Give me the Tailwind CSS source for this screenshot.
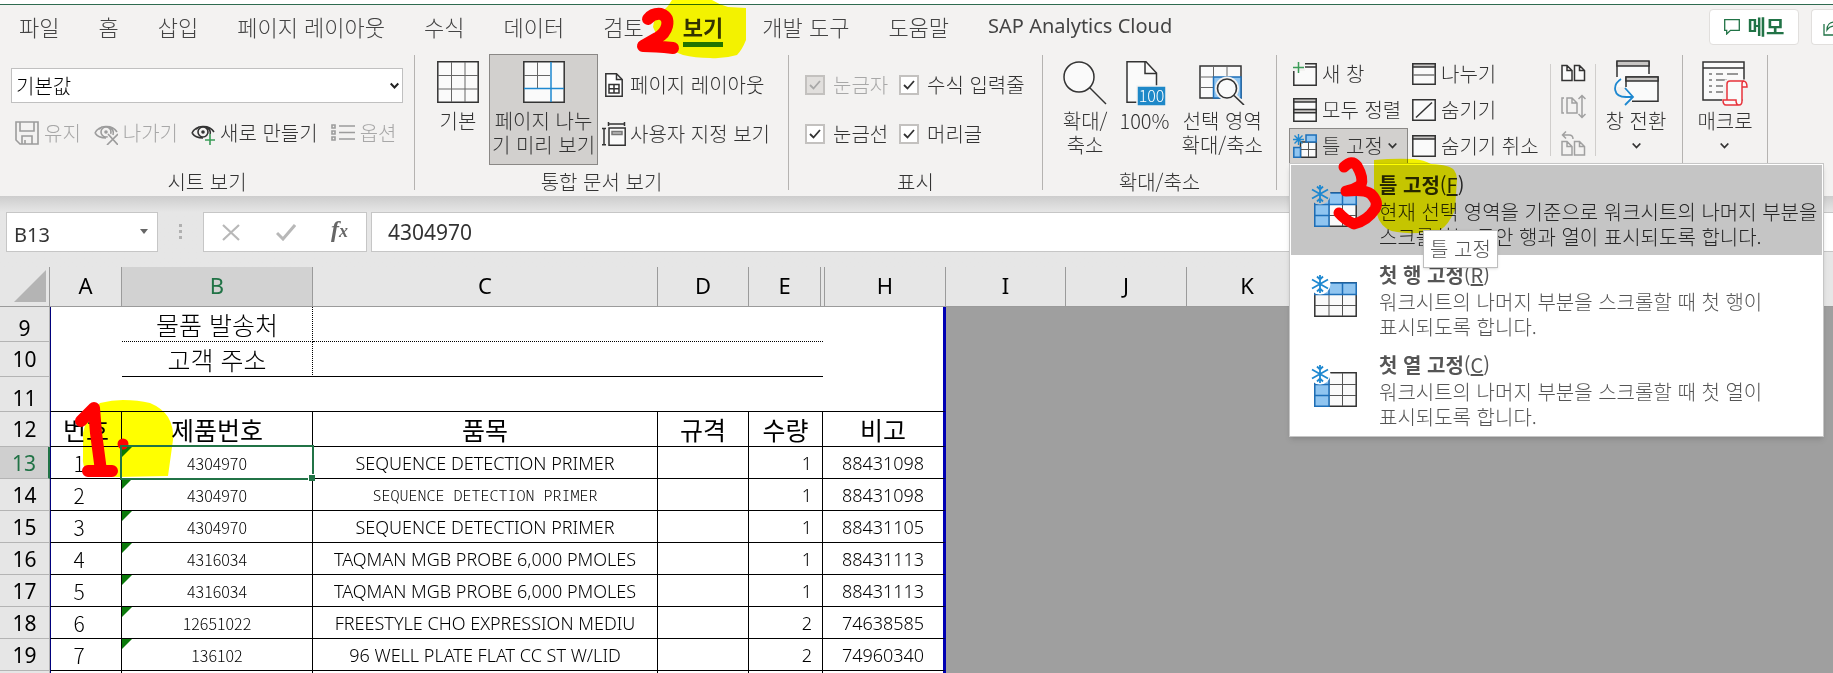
<!DOCTYPE html>
<html lang="ko">
<head>
    <meta charset="UTF-8">
    <title>Excel - 보기</title>
    <!-- Tailwind CSS CDN -->
    <script src="https://cdn.jsdelivr.net/npm/@tailwindcss/browser@4"></script>
</head>
<body class="relative flex h-screen flex-col overflow-hidden bg-[#e6e6e6] font-['Noto_Sans_CJK_KR',sans-serif] text-[20px] font-light leading-[24px] text-[#333]">

    <!-- Ribbon tabs -->
    <header class="flex h-[54px] shrink-0 items-start border-t-4 border-white bg-[#f3f2f1]">
        <div class="flex h-[50px] w-full items-start justify-between border-t border-[#2f6b50]">
            <nav class="flex items-start gap-[39px] pl-[19px] pt-[4px] text-[22px] leading-[34px] text-[#444]">
                <button type="button">파일</button>
                <button type="button">홈</button>
                <button type="button">삽입</button>
                <button type="button">페이지 레이아웃</button>
                <button type="button">수식</button>
                <button type="button">데이터</button>
                <button type="button">검토</button>
                <button type="button" class="h-[38px] border-b-5 border-[#217346] font-bold text-[#333]">보기</button>
                <button type="button">개발 도구</button>
                <button type="button">도움말</button>
                <button type="button" class="font-['Noto_Sans',sans-serif] text-[20px] font-normal">SAP Analytics Cloud</button>
            </nav>
            <div class="flex shrink-0 gap-[12px] pt-[4px]">
                <button type="button" class="flex h-[36px] w-[90px] items-center justify-center gap-[8px] rounded border border-[#e1dfdd] bg-white font-bold text-[#217346]">
                    <svg class="h-[16px] w-[16px]" viewBox="0 0 16 16" fill="none" stroke="#217346" stroke-width="1.3"><path d="M.7.7h14.6v10.6H6.5L2.7 15v-3.7h-2z"/></svg>
                    메모
                </button>
                <button type="button" aria-label="공유" class="flex h-[36px] w-[22px] items-center overflow-hidden rounded-l border border-r-0 border-[#e1dfdd] bg-white pl-[11px]">
                    <svg class="h-[18px] w-[18px] shrink-0" viewBox="0 0 18 18" fill="none" stroke="#217346" stroke-width="1.3"><path d="M1 6v11h15v-4M4 12c0-5 3-8 7-8V1l6 5-6 5V8c-3 0-5 1-7 4z"/></svg>
                </button>
            </div>
        </div>
    </header>

    <!-- Ribbon body -->
    <div class="flex h-[142px] shrink-0 bg-[#f3f2f1]">

        <!-- Sheet view -->
        <section class="flex w-[414px] shrink-0 flex-col items-center pt-[14px]">
            <div class="relative w-[392px]">
                <select aria-label="시트 보기" class="h-[35px] w-full appearance-none border border-[#c0c0c0] bg-white pl-[4px] leading-[32px] text-black">
                    <option>기본값</option>
                </select>
                <svg class="pointer-events-none absolute right-[4px] top-[14px] h-[8px] w-[9px]" viewBox="0 0 9 8" fill="none" stroke="#222" stroke-width="2"><path d="M.7 1.5l3.8 4 3.8-4"/></svg>
            </div>
            <div class="mt-[18px] flex w-full gap-[13px] whitespace-nowrap pl-[15px] text-[#a8a8a8]">
                <button type="button" disabled class="flex items-center gap-[5px]">
                    <svg class="h-[24px] w-[24px]" viewBox="0 0 24 24" fill="none" stroke="#9c9c9c" stroke-width="1.6"><path d="M1 1h22v22H5l-4-4zM5 1v9h14V1M7 23v-8h10v8M10 23v-4"/></svg>
                    유지
                </button>
                <button type="button" disabled class="flex items-center gap-[5px]">
                    <svg class="h-[24px] w-[24px]" viewBox="0 0 24 24" fill="none" stroke="#9c9c9c" stroke-width="1.6"><path d="M1 12C5 4 18 3 23 11M1 12c2 3 6 5 11 5M15 6c4 2 5 5 4 8M5 8l3 -2"/><circle cx="12" cy="11" r="5"/><circle cx="12" cy="11" r="1" fill="#9c9c9c"/><path stroke="#f3f2f1" stroke-width="4" d="M14 13l10 11M24 13L13 24"/><path d="M14 13l10 11M24 13L13 24"/></svg>
                    나가기
                </button>
                <button type="button" class="flex items-center gap-[5px] text-[#333]">
                    <svg class="h-[24px] w-[24px]" viewBox="0 0 24 24" fill="none" stroke="#333" stroke-width="1.6"><path d="M1 12C5 4 18 3 23 11M1 12c2 3 6 5 11 5M15 6c4 2 5 5 4 8M5 8l3 -2"/><circle cx="12" cy="11" r="5"/><circle cx="12" cy="11" r="1" fill="#333"/><path stroke="#f3f2f1" stroke-width="4" d="M19 13v11M14 19h10"/><path stroke="#3a9c57" d="M19 13v11M14 19h10"/></svg>
                    새로 만들기
                </button>
                <button type="button" disabled class="flex items-center gap-[5px]">
                    <svg class="h-[24px] w-[24px]" viewBox="0 0 24 24" fill="none" stroke="#9c9c9c" stroke-width="1.6"><path d="M1 4h3v3H1zM1 10h3v3H1zM1 16h3v3H1zM8 5h16M8 11.500h16M8 18h16"/></svg>
                    옵션
                </button>
            </div>
            <h2 class="mt-auto pb-[2px]">시트 보기</h2>
        </section>

        <div class="mt-px h-[135px] w-px shrink-0 bg-[#b5b3b1]"></div>

        <!-- Workbook views -->
        <section class="flex w-[373px] shrink-0 flex-col">
            <div class="flex">
                <button type="button" class="flex w-[74px] flex-col items-center pt-[7px] pl-[12px]">
                    <svg class="h-[42px] w-[42px]" viewBox="0 0 42 42" fill="none"><path fill="#fafafa" stroke="#333" stroke-width="1.5" d="M.8.8h40.400v40.400H.8z"/><path stroke="#666" d="M14.500 1v40M28 1v40M1 14.500h40M1 28h40"/></svg>
                    <span class="mt-[6px]">기본</span>
                </button>
                <button type="button" class="flex h-[111px] w-[109px] flex-col items-center whitespace-nowrap border border-[#8a8886] bg-[#d2d0ce] pt-[6px]">
                    <svg class="h-[42px] w-[42px]" viewBox="0 0 42 42" fill="none"><path fill="#fafafa" stroke="#333" stroke-width="1.5" d="M.8.8h40.400v40.400H.8z"/><path stroke="#666" d="M14.500 1v26M1 14.500h26"/><path stroke="#1e88d0" stroke-width="1.5" d="M28 1v40M1 27.500h40"/></svg>
                    <span class="mt-[6px]">페이지 나누<br>기 미리 보기</span>
                </button>
                <div class="flex flex-col items-start gap-[25px] whitespace-nowrap pl-[4px] pt-[19px]">
                    <button type="button" class="flex items-center gap-[4px]">
                        <svg class="h-[24px] w-[24px]" viewBox="0 0 24 24" fill="none" stroke="#333" stroke-width="1.500"><path fill="#fff" d="M3.800 .8h10.700L20.200 6.500v16.700H3.800z"/><path d="M14.500 1v5.500h5.500M7 11.500h10v8.500H7zM12 11.500v8.500M7 15.700h10"/></svg>
                        페이지 레이아웃
                    </button>
                    <button type="button" class="flex items-center gap-[4px]">
                        <svg class="h-[24px] w-[24px]" viewBox="0 0 24 24" fill="none" stroke="#333" stroke-width="1.500"><path fill="#fafafa" d="M7 6h16.200v17.200H7z"/><path fill="#bbb" stroke="#777" d="M10 9.500h10v3H10z"/><path d="M6.500 2h16M6.500 0v4M22.500 0v4M2 6v17M0 6.500h4M0 22.800h4"/></svg>
                        사용자 지정 보기
                    </button>
                </div>
            </div>
            <h2 class="mt-auto pb-[2px] text-center">통합 문서 보기</h2>
        </section>

        <div class="mt-px h-[135px] w-px shrink-0 bg-[#b5b3b1]"></div>

        <!-- Show -->
        <section class="flex w-[253px] shrink-0 flex-col">
            <div class="grid grid-cols-[94px_1fr] gap-y-[25px] whitespace-nowrap pl-[16px] pt-[19px]">
                <label class="relative flex items-center gap-[8px] text-[#a8a8a8]">
                    <input type="checkbox" checked disabled class="h-[20px] w-[20px] appearance-none border-2 border-[#c3c1bf] bg-[#e1dfdd]">
                    <svg class="pointer-events-none absolute left-[4px] h-[10px] w-[12px]" viewBox="0 0 12 10" fill="none" stroke="#a8a8a8" stroke-width="1.800"><path d="M1 5l3.500 3.500L11 1"/></svg>
                    눈금자
                </label>
                <label class="relative flex items-center gap-[8px]">
                    <input type="checkbox" checked class="h-[20px] w-[20px] appearance-none border-2 border-[#c3c1bf] bg-white">
                    <svg class="pointer-events-none absolute left-[4px] h-[10px] w-[12px]" viewBox="0 0 12 10" fill="none" stroke="#333" stroke-width="1.800"><path d="M1 5l3.500 3.500L11 1"/></svg>
                    수식 입력줄
                </label>
                <label class="relative flex items-center gap-[8px]">
                    <input type="checkbox" checked class="h-[20px] w-[20px] appearance-none border-2 border-[#c3c1bf] bg-white">
                    <svg class="pointer-events-none absolute left-[4px] h-[10px] w-[12px]" viewBox="0 0 12 10" fill="none" stroke="#333" stroke-width="1.800"><path d="M1 5l3.500 3.500L11 1"/></svg>
                    눈금선
                </label>
                <label class="relative flex items-center gap-[8px]">
                    <input type="checkbox" checked class="h-[20px] w-[20px] appearance-none border-2 border-[#c3c1bf] bg-white">
                    <svg class="pointer-events-none absolute left-[4px] h-[10px] w-[12px]" viewBox="0 0 12 10" fill="none" stroke="#333" stroke-width="1.800"><path d="M1 5l3.500 3.500L11 1"/></svg>
                    머리글
                </label>
            </div>
            <h2 class="mt-auto pb-[2px] text-center">표시</h2>
        </section>

        <div class="mt-px h-[135px] w-px shrink-0 bg-[#b5b3b1]"></div>

        <!-- Zoom -->
        <section class="flex w-[233px] shrink-0 flex-col">
            <div class="flex justify-end gap-[12px] whitespace-nowrap pr-[13px] pt-[7px]">
                <button type="button" class="flex flex-col items-center">
                    <svg class="h-[44px] w-[44px]" viewBox="0 0 44 44" fill="none" stroke="#333" stroke-width="1.500"><circle cx="16" cy="16" r="15" fill="#fafafa"/><path d="M26.500 26.500L43 43"/></svg>
                    <span class="mt-[4px]">확대/<br>축소</span>
                </button>
                <button type="button" class="flex flex-col items-center">
                    <svg class="h-[44px] w-[44px] overflow-visible" viewBox="0 0 44 44" fill="none" stroke="#333" stroke-width="1.500"><path fill="#fafafa" d="M5 .8h19L34.500 12v29.200H5z"/><path d="M23 1v11.500h11.500"/><path fill="#1e88c8" stroke="#f3f2f1" d="M15 25h29v20H15z"/><text x="29.500" y="41" text-anchor="middle" fill="#fff" stroke="none" font-size="16">100</text></svg>
                    <span class="mt-[4px]">100%</span>
                </button>
                <button type="button" class="flex flex-col items-center">
                    <svg class="h-[44px] w-[46px]" viewBox="0 0 46 44" fill="none"><path fill="#fafafa" stroke="#333" stroke-width="1.500" d="M1 5h41v32H1z"/><path stroke="#666" d="M14.500 5v32M28 5v11M1 16h14M1 26.500h14"/><path fill="#90c5f0" stroke="#1e6fb8" stroke-width="1.500" d="M14.500 16H42v21H14.500z"/><circle cx="28" cy="27.500" r="12" fill="#f3f2f1"/><path stroke="#f3f2f1" stroke-width="6" d="M34 34l10 10"/><circle cx="28" cy="27.500" r="9.500" fill="#fafafa" stroke="#333" stroke-width="1.600"/><path stroke="#333" stroke-width="1.600" d="M35 34.500l10 9.500"/></svg>
                    <span class="mt-[4px]">선택 영역<br>확대/축소</span>
                </button>
            </div>
            <h2 class="mt-auto pb-[2px] text-center">확대/축소</h2>
        </section>

        <div class="mt-px h-[135px] w-px shrink-0 bg-[#b5b3b1]"></div>

        <!-- Window -->
        <section class="flex w-[405px] shrink-0 items-start whitespace-nowrap pl-[12px] pt-[2px]">
            <div class="flex w-[119px] flex-col">
                <button type="button" class="flex h-[36px] items-center gap-[5px] pl-[4px]">
                    <svg class="h-[24px] w-[24px]" viewBox="0 0 24 24" fill="none" stroke="#333" stroke-width="1.500"><path fill="#fafafa" stroke="none" d="M1 9h11V3h11v20H1z"/><path d="M12 1.800h11.200v21.400H.8V9M12 5h11"/><path stroke="#3a9c57" d="M5.500 0v11M0 5.500h11"/></svg>
                    새 창
                </button>
                <button type="button" class="flex h-[36px] items-center gap-[5px] pl-[4px]">
                    <svg class="h-[24px] w-[24px]" viewBox="0 0 24 24" fill="none" stroke="#333" stroke-width="1.500"><path fill="#fafafa" d="M.8.8h22.400v22.400H.8z"/><path fill="#c8c6c4" d="M.8.8h22.400v3.200H.8zM.8 11.500h22.400v3.200H.8z"/></svg>
                    모두 정렬
                </button>
                <button type="button" class="flex h-[36px] items-center gap-[5px] border border-[#8a8886] bg-[#d2d0ce] pl-[3px]">
                    <svg class="h-[24px] w-[24px]" viewBox="0 0 24 24" fill="none"><path fill="#fafafa" stroke="#333" stroke-width="1.500" d="M7.500 8h15.700v15.200H7.500z"/><path fill="#90c5f0" stroke="#1e6fb8" stroke-width="1.500" d="M13 1h10.200v7H13zM.8 13.500h6.700v9.700H.8z"/><path stroke="#555" d="M15.500 8v15M8 15.500h15"/><path stroke="#1e88d0" stroke-width="1.400" d="M5.500 0v11M0 5.500h11M1.500 1.500l8 8M9.500 1.500l-8 8"/></svg>
                    틀 고정
                    <svg class="h-[8px] w-[9px]" viewBox="0 0 9 8" fill="none" stroke="#333" stroke-width="1.800"><path d="M.7 1.500l3.800 4 3.800-4"/></svg>
                </button>
            </div>
            <div class="flex w-[142px] flex-col items-start pl-[4px]">
                <button type="button" class="flex h-[36px] items-center gap-[5px]">
                    <svg class="h-[24px] w-[24px]" viewBox="0 0 24 24" fill="none" stroke="#333" stroke-width="1.500"><path fill="#fafafa" d="M.8 1.800h22.400v20.400H.8z"/><path fill="#c8c6c4" d="M.8 1.800h22.400v3.200H.8z"/><path stroke="#777" d="M1 13h22"/></svg>
                    나누기
                </button>
                <button type="button" class="flex h-[36px] items-center gap-[5px]">
                    <svg class="h-[24px] w-[24px]" viewBox="0 0 24 24" fill="none" stroke="#333" stroke-width="1.500"><path fill="#fafafa" d="M.8 1.800h22.400v20.400H.8z"/><path d="M4 19.500L20 4.500"/></svg>
                    숨기기
                </button>
                <button type="button" class="flex h-[36px] items-center gap-[5px]">
                    <svg class="h-[24px] w-[24px]" viewBox="0 0 24 24" fill="none" stroke="#333" stroke-width="1.500"><path fill="#fafafa" d="M.8 1.800h22.400v20.400H.8z"/><path fill="#c8c6c4" d="M.8 1.800h22.400v3.200H.8z"/></svg>
                    숨기기 취소
                </button>
            </div>
            <div class="mt-[8px] flex h-[92px] w-[46px] flex-col items-center justify-between border-x border-[#d0cecc]">
                <button type="button" aria-label="나란히 보기">
                    <svg class="h-[18px] w-[25px]" viewBox="0 0 25 18" fill="#fafafa" stroke="#333" stroke-width="1.500"><path d="M1 1.500h5l5 5V16.500H1zM13.500 1.500h5l5 5V16.500h-10zM6 1.500v5h5M18.500 1.500v5h5"/></svg>
                </button>
                <button type="button" disabled aria-label="동시 스크롤">
                    <svg class="h-[25px] w-[25px]" viewBox="0 0 25 25" fill="none" stroke="#a0a0a0" stroke-width="1.500"><path d="M6 4h5l5 5v10H6zM11 4v5h5M3 4H1v15h2M21 1.500v22M17.500 5L21 1.500 24.500 5M17.500 20l3.500 3.500 3.500-3.500"/></svg>
                </button>
                <button type="button" disabled aria-label="창 위치 다시 정렬">
                    <svg class="h-[25px] w-[25px]" viewBox="0 0 25 25" fill="none" stroke="#a0a0a0" stroke-width="1.500"><path d="M1 10.500h5l5 5V24H1zM13.500 10.500h5l5 5V24h-10zM6 10.500v5h5M18.500 10.500v5h5M5 .5L1.500 4 5 7.500M1.500 4H8c3 0 4 1 4 4"/></svg>
                </button>
            </div>
            <button type="button" class="flex w-[80px] flex-col items-center pt-[4px]">
                <svg class="h-[46px] w-[46px]" viewBox="0 0 46 46" fill="none" stroke="#333" stroke-width="1.500"><path fill="#fafafa" stroke="none" d="M4 1h32v16H13v10H4z"/><path d="M4 17V2h32v12"/><path fill="#c8c6c4" d="M4 1h32v5H4z"/><path fill="#fafafa" stroke="none" d="M13 17h32v24H13z"/><path d="M13 27V17h32v24.200H19"/><path fill="#c8c6c4" d="M13 17h32v4H13z"/><path stroke="#1e88d0" stroke-width="1.800" d="M8 19c-9 6-8 18 5 18h6M12 28l8 9-8 8"/></svg>
                <span class="mt-[3px]">창 전환</span>
                <svg class="mt-[9px] h-[8px] w-[9px]" viewBox="0 0 9 8" fill="none" stroke="#333" stroke-width="1.800"><path d="M.7 1.500l3.800 4 3.800-4"/></svg>
            </button>
        </section>

        <div class="mt-px h-[135px] w-px shrink-0 bg-[#b5b3b1]"></div>

        <!-- Macros -->
        <section class="flex w-[84px] shrink-0 flex-col items-center pt-[6px]">
            <button type="button" class="flex flex-col items-center">
                <svg class="h-[46px] w-[46px]" viewBox="0 0 46 46" fill="none" stroke="#333" stroke-width="1.500"><path fill="#fafafa" d="M1 2h41v38H1z"/><path d="M1 8h41"/><path stroke="#777" d="M7 14h3M14 14h7M25 14h11M7 20h3M14 20h11M7 26h3M14 26h7M7 32h3M14 32h7"/><path stroke="#f3f2f1" stroke-width="5" d="M25 22h18v22H22z"/><path fill="#fafafa" stroke="#e8333b" d="M28 21h13c3 0 4 2 4 6h-5v14c0 3-1 4-3 4H24c-2 0-3-2-3-5h4V24c0-2 1-3 3-3zM40 27v-3c0-2 1-3 2-3M25 40h9c0 3 1 5 3 5"/></svg>
                <span class="mt-[3px]">매크로</span>
                <svg class="mt-[9px] h-[8px] w-[9px]" viewBox="0 0 9 8" fill="none" stroke="#333" stroke-width="1.800"><path d="M.7 1.500l3.800 4 3.800-4"/></svg>
            </button>
        </section>

        <div class="mt-px h-[135px] w-px shrink-0 bg-[#b5b3b1]"></div>
    </div>

    <!-- Formula bar -->
    <div class="flex h-[71px] shrink-0 items-start bg-linear-to-b from-[#cdcdcd] to-[#e6e6e6] to-[16px] pl-[6px] pt-[16px] font-['Noto_Sans',sans-serif] text-[21px] font-normal">
        <div class="relative">
            <input type="text" aria-label="이름 상자" value="B13" class="h-[40px] w-[152px] border border-[#c6c6c6] bg-white pl-[7px] pt-[4px] text-[20px]">
            <svg class="pointer-events-none absolute right-[10px] top-[17px] h-[5px] w-[8px]" viewBox="0 0 8 5"><path fill="#666" d="M0 0h8L4 5z"/></svg>
        </div>
        <svg class="mx-[20px] mt-[12px] h-[16px] w-[5px]" viewBox="0 0 5 16" fill="#b0b0b0"><path d="M1 0h3v3H1zM1 6h3v3H1zM1 12h3v3H1z"/></svg>
        <div class="flex h-[40px] w-[164px] items-center justify-between border border-[#c6c6c6] bg-white px-[18px]">
            <button type="button" aria-label="취소">
                <svg class="h-[17px] w-[18px]" viewBox="0 0 18 17" fill="none" stroke="#b8b8b8" stroke-width="2.200"><path d="M1 1l16 15M17 1L1 16"/></svg>
            </button>
            <button type="button" aria-label="입력">
                <svg class="h-[17px] w-[20px]" viewBox="0 0 20 17" fill="none" stroke="#b8b8b8" stroke-width="3"><path d="M1 9l6 6L19 1"/></svg>
            </button>
            <button type="button" aria-label="함수 삽입" class="pb-[4px] font-['Liberation_Serif',serif] text-[24px] font-bold italic text-[#666]">f<span class="text-[18px]">x</span></button>
        </div>
        <input type="text" aria-label="수식 입력줄" value="4304970" class="ml-[4px] h-[40px] min-w-0 flex-1 border border-r-0 border-[#c6c6c6] bg-white pl-[16px]">
    </div>

    <!-- Sheet -->
    <div class="min-h-0 flex-1 overflow-hidden bg-[#9f9f9f]">
        <table class="w-[1913px] table-fixed border-separate border-spacing-0 text-center leading-[20px] text-black">
            <colgroup>
                <col class="w-[50px]">
                <col class="w-[72px]">
                <col class="w-[191px]">
                <col class="w-[345px]">
                <col class="w-[91px]">
                <col class="w-[72px]">
                <col class="w-[2px]">
                <col class="w-[2px]">
                <col class="w-[121px]">
                <col class="w-[120px]">
                <col class="w-[121px]">
                <col class="w-[121px]">
                <col class="w-[121px]">
                <col class="w-[121px]">
                <col class="w-[121px]">
                <col class="w-[121px]">
                <col class="w-[121px]">
            </colgroup>
            <thead class="bg-[#e6e6e6] font-['Noto_Sans',sans-serif] text-[22px]">
                <tr class="h-[40px] *:border-b *:border-r *:border-[#9b9b9b] *:pb-[4px] *:font-normal">
                    <th><svg class="mt-[2px] ml-[14px] h-[32px] w-[32px]" viewBox="0 0 32 32"><path fill="#b4b4b4" d="M32 0v32H0z"/></svg></th>
                    <th>A</th>
                    <th class="border-b-2 border-b-[#217346] bg-[#d2d2d2] text-[#217346]">B</th>
                    <th>C</th>
                    <th>D</th>
                    <th>E</th>
                    <th colspan="2"></th>
                    <th>H</th>
                    <th>I</th>
                    <th>J</th>
                    <th>K</th>
                    <th>L</th>
                    <th>M</th>
                    <th></th>
                    <th></th>
                    <th></th>
                </tr>
            </thead>
            <tbody id="sheet-rows" class="bg-white text-[25px]">
                <tr class="h-[35px]">
                    <th class="border-b border-r border-[#b4b4b4] bg-[#e6e6e6] pt-[8px] font-['Noto_Sans',sans-serif] text-[21px] font-normal">9</th>
                    <td class="border-l border-[#00007c]"></td>
                    <td class="border-b border-r border-dotted border-black">물품 발송처</td>
                    <td colspan="4" class="border-b border-dotted border-black"></td>
                    <td colspan="2" class="border-r-3 border-[#0000b4]"></td>
                    <td colspan="8" class="bg-[#9f9f9f]"></td>
                </tr>
                <tr class="h-[35px]">
                    <th class="border-b border-r border-[#b4b4b4] bg-[#e6e6e6] font-['Noto_Sans',sans-serif] text-[21px] font-normal">10</th>
                    <td class="border-l border-[#00007c]"></td>
                    <td class="border-b border-r border-black [border-right-style:dotted]">고객 주소</td>
                    <td colspan="4" class="border-b border-black"></td>
                    <td colspan="2" class="border-r-3 border-[#0000b4]"></td>
                    <td colspan="8" class="bg-[#9f9f9f]"></td>
                </tr>
                <tr class="h-[35px]">
                    <th class="border-b border-r border-[#b4b4b4] bg-[#e6e6e6] pt-[8px] font-['Noto_Sans',sans-serif] text-[21px] font-normal">11</th>
                    <td colspan="6" class="border-b border-l border-black border-l-[#00007c]"></td>
                    <td colspan="2" class="border-b border-r-3 border-black border-r-[#0000b4]"></td>
                    <td colspan="8" class="bg-[#9f9f9f]"></td>
                </tr>
                <tr class="h-[35px] font-normal">
                    <th class="border-b border-r border-[#b4b4b4] bg-[#e6e6e6] font-['Noto_Sans',sans-serif] text-[21px] font-normal">12</th>
                    <td class="border-b border-l border-r border-black border-l-[#00007c]">번호</td>
                    <td class="border-b border-r border-black">제품번호</td>
                    <td class="border-b border-r border-black">품목</td>
                    <td class="border-b border-r border-black">규격</td>
                    <td colspan="2" class="border-b border-r border-black">수량</td>
                    <td colspan="2" class="border-b border-r-3 border-black border-r-[#0000b4]">비고</td>
                    <td colspan="8" class="bg-[#9f9f9f]"></td>
                </tr>
            </tbody>
        </table>
    </div>

    <!-- Freeze panes menu -->
    <div role="menu" class="absolute left-[1289px] top-[163px] w-[535px] border border-[#c6c6c6] bg-white p-px text-left text-[#555] shadow-md">
        <button type="button" role="menuitem" class="flex h-[90px] w-full items-start whitespace-nowrap bg-[#c5c5c5] pl-[20px] pt-[6px] text-left text-[#262626]">
            <svg class="mt-[14px] mr-[22px] h-[44px] w-[46px]" viewBox="0 0 46 44" fill="none"><path fill="#fafafa" stroke="#333" stroke-width="1.500" d="M3.800 7.800h41.400v33.400H3.800z"/><path stroke="#555" d="M18 8v33M31.500 8v33M4 19.500h41M4 30.500h41"/><path fill="#90c5f0" stroke="#1e6fb8" stroke-width="1.500" d="M3.800 8h41.400v11.500H18v21.700H3.800z"/><path stroke="#1e6fb8" stroke-width="1.500" d="M18 8v11.500H4M31.500 8v11.500M4 30.500h14"/><circle cx="9" cy="9" r="10.500" fill="#c5c5c5"/><path stroke="#1e88d0" stroke-width="1.800" d="M9 0v18M1 4.500l16 9M17 4.500l-16 9M6 1.500l3 3 3-3M6 16.500l3-3 3 3"/></svg>
            <span class="leading-[25px]"><span class="block leading-[28px]"><span class="font-bold">틀 고정</span><span class="font-normal">(<u>F</u>)</span></span>현재 선택 영역을 기준으로 워크시트의 나머지 부분을<br>스크롤하는 동안 행과 열이 표시되도록 합니다.</span>
        </button>
        <button type="button" role="menuitem" class="flex h-[90px] w-full items-start whitespace-nowrap pl-[20px] pt-[6px] text-left">
            <svg class="mt-[14px] mr-[22px] h-[44px] w-[46px]" viewBox="0 0 46 44" fill="none"><path fill="#fafafa" stroke="#333" stroke-width="1.500" d="M3.800 7.800h41.400v33.400H3.800z"/><path stroke="#555" d="M18 8v33M31.500 8v33M4 19.500h41M4 30.500h41"/><path fill="#90c5f0" stroke="#1e6fb8" stroke-width="1.500" d="M3.800 8h41.400v11.500H3.800z"/><path stroke="#1e6fb8" stroke-width="1.500" d="M18 8v11.500M31.500 8v11.500"/><circle cx="9" cy="9" r="10.500" fill="#fff"/><path stroke="#1e88d0" stroke-width="1.800" d="M9 0v18M1 4.500l16 9M17 4.500l-16 9M6 1.500l3 3 3-3M6 16.500l3-3 3 3"/></svg>
            <span class="leading-[25px]"><span class="block leading-[28px]"><span class="font-bold">첫 행 고정</span><span class="font-normal">(<u>R</u>)</span></span>워크시트의 나머지 부분을 스크롤할 때 첫 행이<br>표시되도록 합니다.</span>
        </button>
        <button type="button" role="menuitem" class="flex h-[90px] w-full items-start whitespace-nowrap pl-[20px] pt-[6px] text-left">
            <svg class="mt-[14px] mr-[22px] h-[44px] w-[46px]" viewBox="0 0 46 44" fill="none"><path fill="#fafafa" stroke="#333" stroke-width="1.500" d="M3.800 7.800h41.400v33.400H3.800z"/><path stroke="#555" d="M18 8v33M31.500 8v33M4 19.500h41M4 30.500h41"/><path fill="#90c5f0" stroke="#1e6fb8" stroke-width="1.500" d="M3.800 8H18v33.200H3.800z"/><path stroke="#1e6fb8" stroke-width="1.500" d="M4 19.500h14M4 30.500h14"/><circle cx="9" cy="9" r="10.500" fill="#fff"/><path stroke="#1e88d0" stroke-width="1.800" d="M9 0v18M1 4.500l16 9M17 4.500l-16 9M6 1.500l3 3 3-3M6 16.500l3-3 3 3"/></svg>
            <span class="leading-[25px]"><span class="block leading-[28px]"><span class="font-bold">첫 열 고정</span><span class="font-normal">(<u>C</u>)</span></span>워크시트의 나머지 부분을 스크롤할 때 첫 열이<br>표시되도록 합니다.</span>
        </button>
    </div>

    <!-- Highlighter marks -->
    <svg class="pointer-events-none absolute left-0 top-0 h-[673px] w-[1833px] mix-blend-multiply" viewBox="0 0 1833 673" fill="#ff0">
        <path d="M668 6L672 0h40q8 5 16 7l18 1v32q-4 10-9 15-13 4-27 3-15 0-27-3-22-8-30-28 1-8 4-10z"/>
        <path d="M83 433q4-20 17-30 12-3 23-3 15 0 27 3 12 5 18 14 6 10 5 23l-5 36-51 1q-20 0-30-4-5-8-4-16z"/>
        <path d="M1374 160q20-2 40-1 10 1 17 5 19 1 23 6 3 4 3 9l-2 31q-7 16-15 20-26 5-43 2-12-1-18-12-4-10-5-22z"/>
    </svg>

    <!-- Tooltip -->
    <div role="tooltip" class="absolute left-[1423px] top-[230px] border border-[#bebebe] bg-white px-[6px] py-[6px] text-[#555] shadow">틀 고정</div>

    <!-- Step numbers -->
    <svg class="pointer-events-none absolute left-0 top-0 h-[673px] w-[1833px]" viewBox="0 0 1833 673" fill="none" stroke="#f00" stroke-width="12" stroke-linecap="round" stroke-linejoin="round">
        <path d="M648 19q5-6 13-5 8 3 6 12-2 8-10 12l-14 8q12 0 30 2"/>
        <path d="M81 421l13-13q1 12 2 25l5 38M88 471h24"/>
        <path stroke-width="11" d="M1344 167q8-8 13-1 7 12 4 19-6 4-15 6 19-2 25 3 8 8 4 15-8 12-21 15-9-4-15-11"/>
        <circle cx="123" cy="444" r="5.500" fill="#f00" stroke="none"/>
    </svg>

    <!-- JavaScript Code -->
    <script>
        const rows = [
            ['4304970', 'SEQUENCE DETECTION PRIMER', 1, '88431098'],
            ['4304970', 'SEQUENCE DETECTION PRIMER', 1, '88431098'],
            ['4304970', 'SEQUENCE DETECTION PRIMER', 1, '88431105'],
            ['4316034', 'TAQMAN MGB PROBE 6,000 PMOLES', 1, '88431113'],
            ['4316034', 'TAQMAN MGB PROBE 6,000 PMOLES', 1, '88431113'],
            ['12651022', 'FREESTYLE CHO EXPRESSION MEDIU', 2, '74638585'],
            ['136102', '96 WELL PLATE FLAT CC ST W/LID', 2, '74960340'],
            ['', '', '', '']
        ];

        const selection = `
            <div class="pointer-events-none absolute -left-[2px] -top-[2px] -bottom-[2px] -right-[2px] z-10 border-2 border-[#217346]"></div>
            <div class="absolute -bottom-[3px] -right-[3px] z-10 h-[7px] w-[7px] border-l border-t border-white bg-[#217346]"></div>`;

        document.getElementById('sheet-rows').insertAdjacentHTML('beforeend', rows.map(([code, item, qty, note], i) => {
            const active = i === 0;
            const itemClass = i === 1 ? "font-['Noto_Sans_Mono','Liberation_Mono',monospace] text-[15px]" : "font-['Noto_Sans',sans-serif] text-[18px]";
            return `
                <tr class="h-[32px]">
                    <th class="border-b font-['Noto_Sans',sans-serif] text-[21px] font-normal ${active ? 'border-r-2 border-b-[#b4b4b4] border-r-[#217346] bg-[#cfcfcf] text-[#217346]' : 'border-r border-[#b4b4b4] bg-[#e6e6e6]'}">${code && 13 + i}</th>
                    <td class="border-b border-l border-r border-black border-l-[#00007c] pr-[14px] text-[21px]">${code && i + 1}</td>
                    <td class="relative border-b border-r border-black text-[16px]">
                        ${code && '<div class="absolute left-0 top-0 h-[10px] w-[10px] bg-[#0b7a0b] [clip-path:polygon(0_0,100%_0,0_100%)]"></div>'}
                        ${active ? selection : ''}${code}
                    </td>
                    <td class="border-b border-r border-black ${itemClass}">${item}</td>
                    <td class="border-b border-r border-black"></td>
                    <td colspan="2" class="border-b border-r border-black pr-[10px] text-right font-['Noto_Sans',sans-serif] text-[18px]">${qty}</td>
                    <td colspan="2" class="border-b border-r-3 border-black border-r-[#0000b4] font-['Noto_Sans',sans-serif] text-[18px]">${note}</td>
                    <td colspan="8" class="bg-[#9f9f9f]"></td>
                </tr>`;
        }).join(''));
    </script>
</body>
</html>
